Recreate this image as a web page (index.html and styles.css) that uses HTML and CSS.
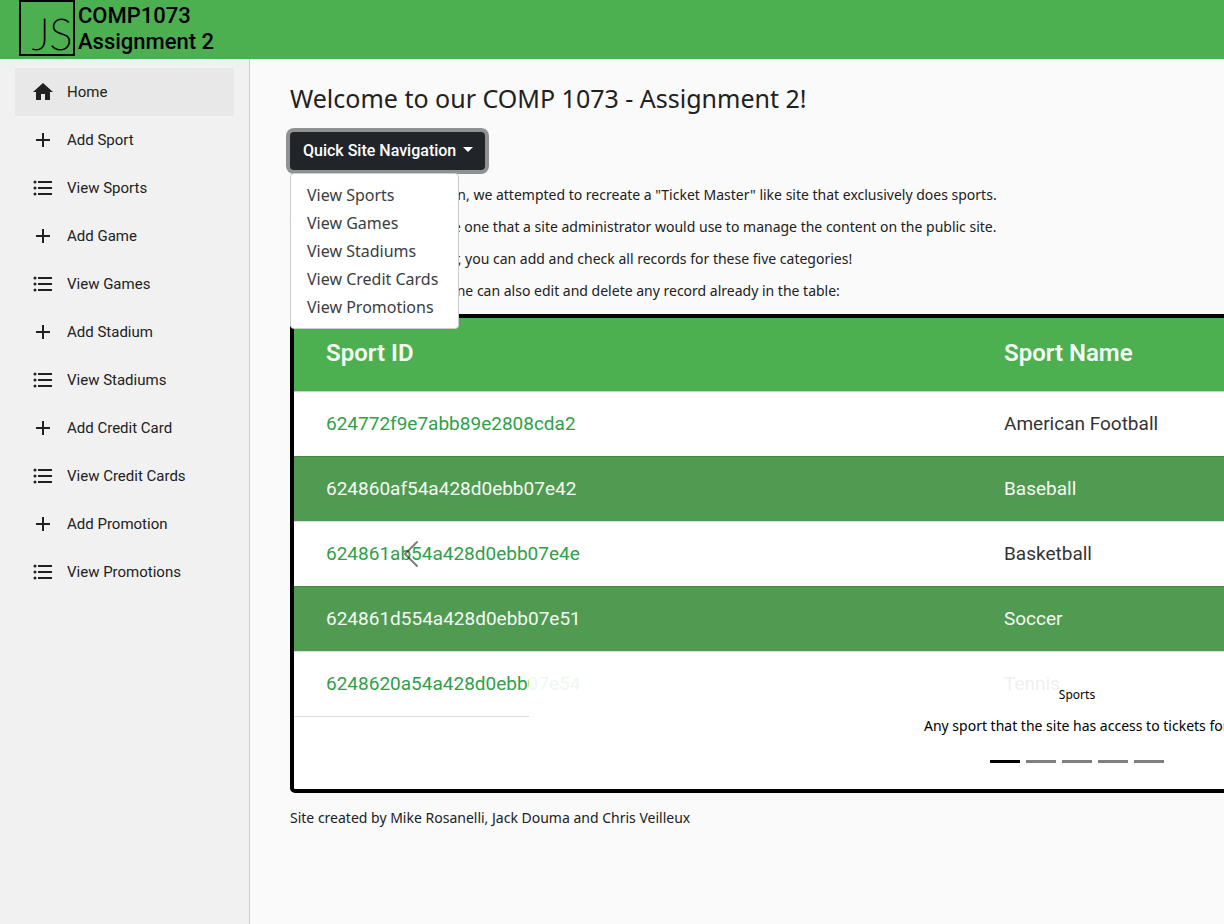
FILE: index.html
```html
<!DOCTYPE html>
<html lang="en">
<head>
<meta charset="utf-8">
<title>COMP1073 Assignment 2</title>
<link rel="stylesheet" href="styles.css">
</head>
<body>
<svg class="sprite" aria-hidden="true">
  <symbol id="home" viewBox="0 0 24 24"><path d="M10 20v-6h4v6h5v-8h3L12 3 2 12h3v8z"/></symbol>
  <symbol id="add" viewBox="0 0 24 24"><path d="M19 13h-6v6h-2v-6H5v-2h6V5h2v6h6z"/></symbol>
  <symbol id="list" viewBox="0 0 24 24"><path d="M7 5h14v2H7zM7 11h14v2H7zM7 17h14v2H7z"/><circle cx="4" cy="6" r="1.5"/><circle cx="4" cy="12" r="1.5"/><circle cx="4" cy="18" r="1.5"/></symbol>
</svg>
<header class="topbar">
  <a class="brand" href="#">
    <svg class="brand-mark" viewBox="0 0 57 56" aria-hidden="true">
      <rect x="2" y="1" width="54" height="54" fill="none" stroke="#000" stroke-width="2"/>
      <text class="brand-js" x="14" y="50">JS</text>
    </svg>
    <span class="brand-name">COMP1073<br>Assignment 2</span>
  </a>
</header>
<div class="layout">
  <nav class="sidebar" aria-label="Main">
    <a class="nav-link active" href="#"><svg class="icon"><use href="#home"/></svg>Home</a>
    <a class="nav-link" href="#"><svg class="icon"><use href="#add"/></svg>Add Sport</a>
    <a class="nav-link" href="#"><svg class="icon"><use href="#list"/></svg>View Sports</a>
    <a class="nav-link" href="#"><svg class="icon"><use href="#add"/></svg>Add Game</a>
    <a class="nav-link" href="#"><svg class="icon"><use href="#list"/></svg>View Games</a>
    <a class="nav-link" href="#"><svg class="icon"><use href="#add"/></svg>Add Stadium</a>
    <a class="nav-link" href="#"><svg class="icon"><use href="#list"/></svg>View Stadiums</a>
    <a class="nav-link" href="#"><svg class="icon"><use href="#add"/></svg>Add Credit Card</a>
    <a class="nav-link" href="#"><svg class="icon"><use href="#list"/></svg>View Credit Cards</a>
    <a class="nav-link" href="#"><svg class="icon"><use href="#add"/></svg>Add Promotion</a>
    <a class="nav-link" href="#"><svg class="icon"><use href="#list"/></svg>View Promotions</a>
  </nav>
  <main class="content">
    <h1 class="title">Welcome to our COMP 1073 - Assignment 2!</h1>
    <div class="dropdown">
      <button class="dropdown-toggle" type="button" aria-expanded="true">Quick Site Navigation</button>
      <div class="dropdown-menu">
        <a class="dropdown-item" href="#">View Sports</a>
        <a class="dropdown-item" href="#">View Games</a>
        <a class="dropdown-item" href="#">View Stadiums</a>
        <a class="dropdown-item" href="#">View Credit Cards</a>
        <a class="dropdown-item" href="#">View Promotions</a>
      </div>
    </div>
    <p class="text">With this demo application, we attempted to recreate a "Ticket Master" like site that exclusively does sports.</p>
    <p class="text">This website would be the one that a site administrator would use to manage the content on the public site.</p>
    <p class="text">Using the site nav sidebar, you can add and check all records for these five categories!</p>
    <p class="text">On each site view page, one can also edit and delete any record already in the table:</p>
    <section class="carousel" aria-label="Site sections">
      <table class="records">
        <thead><tr><th class="id-col">Sport ID</th><th>Sport Name</th></tr></thead>
        <tbody>
          <tr><td><a href="#">624772f9e7abb89e2808cda2</a></td><td>American Football</td></tr>
          <tr><td><a href="#">624860af54a428d0ebb07e42</a></td><td>Baseball</td></tr>
          <tr><td><a href="#">624861ab54a428d0ebb07e4e</a></td><td>Basketball</td></tr>
          <tr><td><a href="#">624861d554a428d0ebb07e51</a></td><td>Soccer</td></tr>
          <tr><td><a href="#">6248620a54a428d0ebb07e54</a></td><td>Tennis</td></tr>
        </tbody>
      </table>
      <div class="caption">
        <h2 class="caption-title">Sports</h2>
        <p class="caption-text">Any sport that the site has access to tickets for.</p>
      </div>
      <button class="prev" type="button" aria-label="Previous">
        <svg class="prev-icon" viewBox="0 0 16 16" aria-hidden="true"><path d="M11.354 1.646a.5.5 0 0 1 0 .708L5.707 8l5.647 5.646a.5.5 0 0 1-.708.708l-6-6a.5.5 0 0 1 0-.708l6-6a.5.5 0 0 1 .708 0z"/></svg>
      </button>
      <div class="indicators">
        <button class="dot current" type="button" aria-label="Slide 1"></button>
        <button class="dot" type="button" aria-label="Slide 2"></button>
        <button class="dot" type="button" aria-label="Slide 3"></button>
        <button class="dot" type="button" aria-label="Slide 4"></button>
        <button class="dot" type="button" aria-label="Slide 5"></button>
      </div>
    </section>
    <p class="text">Site created by Mike Rosanelli, Jack Douma and Chris Veilleux</p>
  </main>
</div>
</body>
</html>
```
FILE: styles.css
```css
* { box-sizing: border-box; }

body {
  margin: 0;
  min-height: 100vh;
  display: flex;
  flex-direction: column;
  background: #fafafa;
  color: #212121;
  font-family: "Noto Sans", "Open Sans", sans-serif;
  font-size: 14px;
  line-height: 20px;
}

.sprite { display: none; }

.topbar {
  height: 59px;
  padding: 0 18px;
  background: #4caf50;
}

.brand {
  display: inline-flex;
  gap: 3px;
  color: #000;
  text-decoration: none;
}

.brand-mark { width: 57px; height: 56px; overflow: visible; }

.brand-js {
  font: 100 43px Lato, sans-serif;
  stroke: #000;
  stroke-width: 1px;
}

.brand-name {
  padding-top: 3px;
  font: 500 22px/26px Roboto, sans-serif;
}

.layout { flex: 1; display: flex; }

.sidebar {
  flex: 0 0 250px;
  padding: 9px 15px;
  background: #f1f1f1;
  border-right: 1px solid #ccc;
}

.nav-link {
  display: flex;
  align-items: center;
  gap: 12px;
  height: 48px;
  padding: 0 16px;
  color: #212121;
  font: 400 15px/20px Roboto, sans-serif;
  text-decoration: none;
}

.nav-link.active { background: #e8e8e8; }

.icon { width: 24px; height: 24px; fill: #212121; }

.content {
  flex: 1;
  min-width: 0;
  padding: 23px 40px;
  overflow: hidden;
}

.title {
  margin: 0 0 18px;
  font-size: 25px;
  font-weight: 400;
  line-height: 32px;
}

.dropdown { position: relative; margin-bottom: 15px; }

.dropdown-toggle {
  display: inline-flex;
  align-items: center;
  gap: 7px;
  height: 38px;
  padding: 0 12px 0 13px;
  border: 0;
  border-radius: 4px;
  background: #212529;
  box-shadow: 0 0 0 4px #909192;
  color: #fff;
  font: 500 16px/24px Roboto, sans-serif;
}

.dropdown-toggle::after {
  content: "";
  margin-bottom: 3px;
  border: 5px solid transparent;
  border-top-color: #fff;
  border-bottom: 0;
}

.dropdown-menu {
  position: absolute;
  z-index: 2;
  top: 41px;
  left: 0;
  min-width: 169px;
  padding: 7px 16px;
  border: 1px solid #ccc;
  border-radius: 4px;
  background: #fff;
}

.dropdown-item {
  display: block;
  color: #3a3d41;
  font-size: 16px;
  line-height: 28px;
  text-decoration: none;
  white-space: nowrap;
}

.text { margin: 0 0 12px; white-space: nowrap; }

.carousel {
  position: relative;
  width: 1574px;
  height: 479px;
  margin: 13px 0 15px;
  overflow: hidden;
  border: 4px solid #000;
  border-radius: 5px;
  background: #fff;
}

.records {
  width: 100%;
  border-collapse: separate;
  border-spacing: 0;
  table-layout: fixed;
  font: 400 19px/24px Roboto, sans-serif;
}

.records th,
.records td { padding: 2px 32px 0; text-align: left; }

.records th {
  height: 74px;
  padding: 0 32px 4px;
  border-bottom: 1px solid #b5dcb7;
  background: #4caf50;
  color: #f4fbf4;
  font-size: 24px;
  font-weight: 600;
}

.records .id-col { width: 678px; }

.records td {
  height: 65px;
  padding-top: 0;
  border-bottom: 1px solid #ddd;
  color: #333;
}

.records a { color: #30a047; text-decoration: none; }

.records tr:nth-child(even) td { background: #509a52; color: #f4fbf4; }
.records tr:nth-child(even) a { color: #f4fbf4; }
.records tbody tr:nth-child(odd):not(:last-child) td { border-bottom-color: #448a47; }

.caption {
  position: absolute;
  right: 15%;
  bottom: 20px;
  left: 15%;
  padding: 20px 0;
  background: rgba(255, 255, 255, 0.92);
  color: #000;
  text-align: center;
}

.caption-title { margin: 0 0 12px; font-size: 12px; font-weight: 400; line-height: 18px; }

.caption-text { margin: 0 0 13px; }

.prev {
  position: absolute;
  top: 0;
  bottom: 0;
  left: 0;
  width: 15%;
  border: 0;
  background: none;
  opacity: 0.5;
}

.prev-icon { width: 32px; height: 32px; vertical-align: middle; }

.indicators {
  position: absolute;
  right: 0;
  bottom: 26px;
  left: 0;
  display: flex;
  justify-content: center;
  gap: 6px;
}

.dot {
  width: 30px;
  height: 3px;
  padding: 0;
  border: 0;
  background: #000;
  opacity: 0.5;
}

.dot.current { opacity: 1; }
```
